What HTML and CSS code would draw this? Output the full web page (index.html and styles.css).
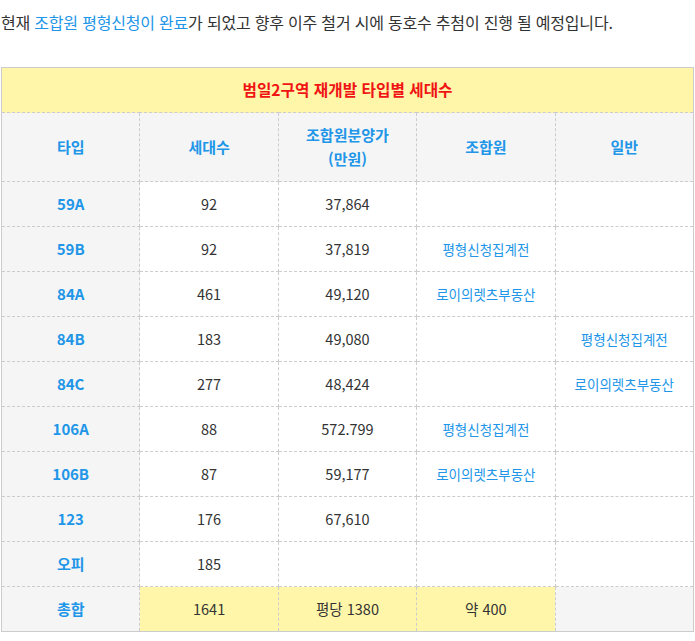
FILE: index.html
```html
<!DOCTYPE html>
<html lang="ko">
<head>
<meta charset="utf-8">
<link rel="stylesheet" href="styles.css">
</head>
<body>
<p class="intro">현재 <span class="hl">조합원 평형신청이 완료</span>가 되었고 향후 이주 철거 시에 동호수 추첨이 진행 될 예정입니다.</p>
<table class="units">
  <tr class="title-row"><th colspan="5">범일2구역 재개발 타입별 세대수</th></tr>
  <tr class="head-row">
    <th>타입</th><th>세대수</th><th>조합원분양가<br>(만원)</th><th>조합원</th><th>일반</th>
  </tr>
  <tr><th>59A</th><td>92</td><td>37,864</td><td></td><td></td></tr>
  <tr><th>59B</th><td>92</td><td>37,819</td><td class="note">평형신청집계전</td><td></td></tr>
  <tr><th>84A</th><td>461</td><td>49,120</td><td class="note">로이의렛츠부동산</td><td></td></tr>
  <tr><th>84B</th><td>183</td><td>49,080</td><td></td><td class="note">평형신청집계전</td></tr>
  <tr><th>84C</th><td>277</td><td>48,424</td><td></td><td class="note">로이의렛츠부동산</td></tr>
  <tr><th>106A</th><td>88</td><td>572.799</td><td class="note">평형신청집계전</td><td></td></tr>
  <tr><th>106B</th><td>87</td><td>59,177</td><td class="note">로이의렛츠부동산</td><td></td></tr>
  <tr><th>123</th><td>176</td><td>67,610</td><td></td><td></td></tr>
  <tr><th>오피</th><td>185</td><td></td><td></td><td></td></tr>
  <tr class="total-row"><th>총합</th><td class="yel">1641</td><td class="yel">평당 1380</td><td class="yel">약 400</td><td class="gray"></td></tr>
</table>
</body>
</html>
```
FILE: styles.css
```css
body {
  margin: 0;
  background: #fff;
  font-family: "Noto Sans CJK KR", "Noto Sans", sans-serif;
  color: #333;
}
.intro {
  margin: 10px 0 0 1px;
  font-size: 16px;
  line-height: 24px;
  letter-spacing: -0.2px;
}
.hl { color: #2196e8; }
.units {
  margin: 33px 0 0 1px;
  width: 693px;
  border-collapse: collapse;
  border: 1px solid #ccc;
  table-layout: fixed;
  font-size: 14.5px;
}
.units th, .units td {
  border: 1px dashed #ccc;
  text-align: center;
  height: 44px;
  padding: 0;
  line-height: 22px;
}
.units th {
  background: #f5f5f5;
  color: #2196e8;
  font-weight: bold;
  font-size: 15px;
}
.units td { color: #333; }
.title-row th {
  background: #fff6a9;
  color: #f01414;
  font-size: 15.7px;
  height: 44px;
}
.head-row th {
  height: 68px;
  line-height: 24px;
}
.units td.note {
  color: #2196e8;
  font-size: 13.5px;
}
.units td.yel { background: #fff6a9; }
.units td.gray { background: #f5f5f5; }
```
